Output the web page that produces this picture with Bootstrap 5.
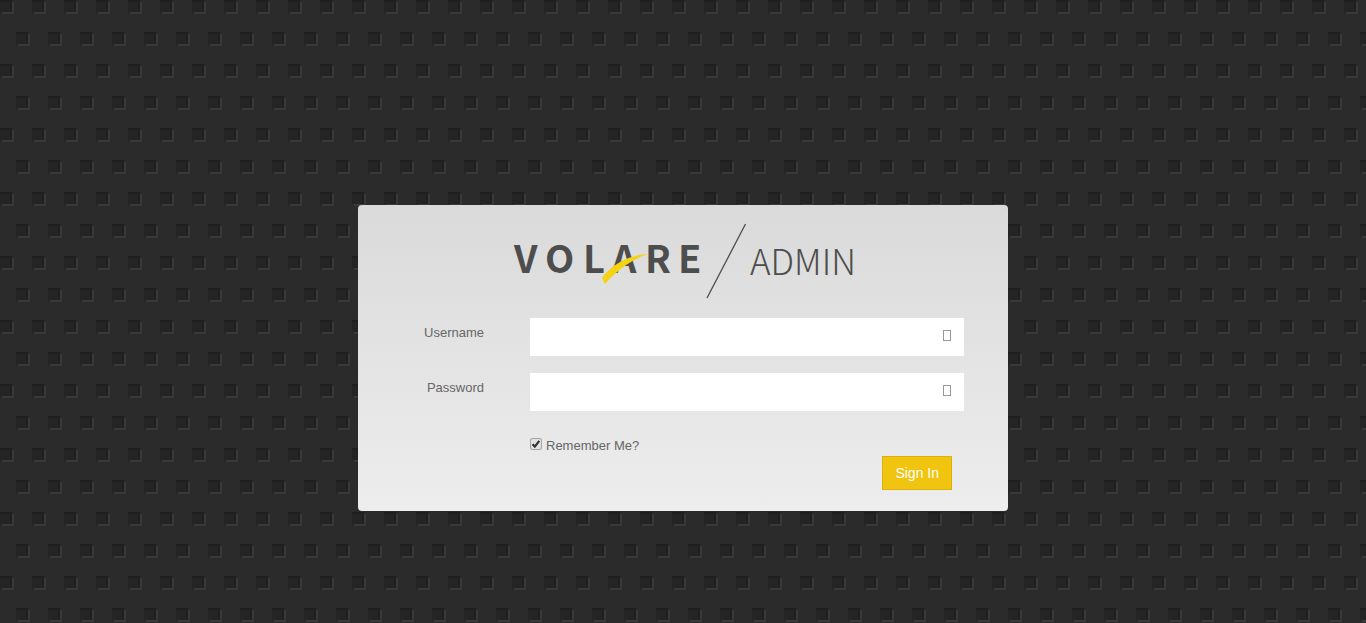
<!DOCTYPE html>
<html lang="en">
<head>
<meta charset="utf-8">
<meta name="viewport" content="width=device-width, initial-scale=1">
<title>Volare Admin</title>
<link href="https://cdn.jsdelivr.net/npm/bootstrap@5.3.0/dist/css/bootstrap.min.css" rel="stylesheet">
<style>
  body {
    font: 13px/20px "Liberation Sans", Arial, sans-serif;
    color: #666;
    background: #2b2b2b url("data:image/svg+xml,%3Csvg xmlns='http://www.w3.org/2000/svg' width='32' height='64'%3E%3Cg id='s'%3E%3Cpath fill='%23393939' d='M2 2h12v12H2z'/%3E%3Cpath fill='%231f1f1f' d='M0 0h12v12H0z'/%3E%3Cpath fill='%23242424' d='M0 2h10v10H0z'/%3E%3C/g%3E%3Cuse href='%23s' x='16' y='32'/%3E%3C/svg%3E");
  }
  .login-panel {
    max-width: 650px;
    margin: 205px auto 0;
    padding: 18px 44px 21px 22px;
    border-radius: 4px;
    background: linear-gradient(#dadada, #ededed);
  }
  .brand-logo { width: 350px; margin: 0 0 18px 133px; max-width: 100%; height: auto; }
  .brand-logo text { font-family: "Noto Sans CJK SC", "Open Sans", sans-serif; fill: #4d4d4d; }
  .field-row { margin-bottom: 17px; }
  .field-label { padding-top: 5px; padding-right: 38px; }
  .login-panel .form-control { height: 38px; border: 0; border-radius: 0; font-size: 14px; padding-right: 36px; }
  .field-glyph { right: 13px; top: 12px; width: 8px; height: 11px; border: 1px solid #999; pointer-events: none; }
  .remember-row { padding-top: 6px; }
  .remember-box {
    appearance: none; width: 12px; height: 12px; margin: 4px 0 0; border: 1px solid #a5a5a5; border-radius: 2px;
    background: #e2e2e2;
  }
  .remember-box:checked {
    background: #e2e2e2 url("data:image/svg+xml,%3Csvg xmlns='http://www.w3.org/2000/svg' viewBox='0 0 10 10'%3E%3Cpath d='M1.5 5.2 3.8 7.6 8.3 1.8' fill='none' stroke='%23333' stroke-width='2.2'/%3E%3C/svg%3E") center / 10px 10px no-repeat;
  }
  .remember-label { padding-top: 2px; }
  .btn-signin {
    --bs-btn-color: #fff; --bs-btn-bg: #f1c40f; --bs-btn-border-color: #dab10d;
    --bs-btn-hover-color: #fff; --bs-btn-hover-bg: #dab10d; --bs-btn-hover-border-color: #c29d0b;
    --bs-btn-border-radius: 0; --bs-btn-font-size: 14px; --bs-btn-line-height: 20px;
    --bs-btn-padding-x: 12px; --bs-btn-padding-y: 6px;
    margin-right: 12px;
  }
</style>
</head>
<body>
<main class="login-panel">
  <svg class="brand-logo d-block" width="350" height="77" viewBox="0 0 350 77" role="img" aria-label="Volare Admin">
    <text font-size="38" font-weight="700" y="50" x="1 32 70 99 132 165">VOLARE</text>
    <path d="M89 55C97 44 113 32 135 31C120 36 105 46 92 61Z" fill="#f5d313"/>
    <path d="M194 75 232.500 1" stroke="#4d4d4d" stroke-width="1.300"/>
    <text font-size="35" font-weight="300" x="237" y="52">ADMIN</text>
  </svg>
  <form>
    <div class="row gx-3 field-row">
      <label for="username" class="col-3 text-end field-label">Username</label>
      <div class="col-9"><div class="position-relative">
        <input id="username" type="text" class="form-control">
        <span class="field-glyph position-absolute"></span>
      </div></div>
    </div>
    <div class="row gx-3 field-row">
      <label for="password" class="col-3 text-end field-label">Password</label>
      <div class="col-9"><div class="position-relative">
        <input id="password" type="password" class="form-control">
        <span class="field-glyph position-absolute"></span>
      </div></div>
    </div>
    <div class="row gx-3 remember-row">
      <div class="col-9 offset-3 d-flex align-items-start gap-1">
        <input id="remember" type="checkbox" class="remember-box" checked>
        <label for="remember" class="remember-label">Remember Me?</label>
      </div>
    </div>
    <div class="text-end"><button type="submit" class="btn btn-signin">Sign In</button></div>
  </form>
</main>
<script src="https://cdn.jsdelivr.net/npm/bootstrap@5.3.0/dist/js/bootstrap.bundle.min.js"></script>
</body>
</html>
